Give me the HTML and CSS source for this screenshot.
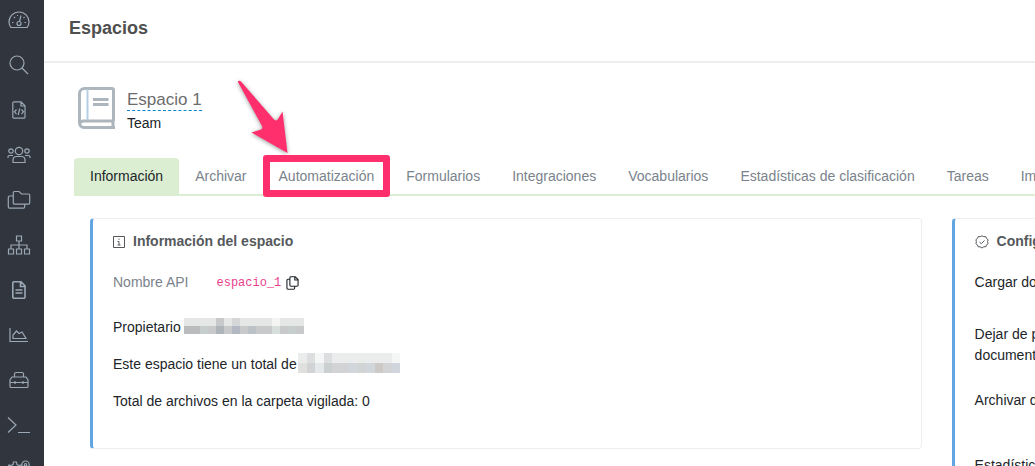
FILE: index.html
```html
<!DOCTYPE html>
<html lang="es">
<head>
  <meta charset="UTF-8" />
  <meta name="viewport" content="width=device-width, initial-scale=1.0" />
  <title>Espacios</title>
  <link rel="stylesheet" href="styles.css">
</head>
<body>

  <nav class="sidebar">
    <a href="#" aria-label="Panel">
      <svg width="22" height="18" viewBox="0 0 22 18"><path d="M3 16.500C1.600 14.900 1 13 1 11a10 10 0 0 1 20 0c0 2-.6 3.900-2 5.500z"/><circle cx="11" cy="12.500" r="2"/><path d="M11.500 10.500l1.500-6M4 11.500h1.500M16.500 11.500H18M6 6l1 1M15.500 7l1-1M9 4.500h1"/></svg>
    </a>
    <a href="#" aria-label="Buscar">
      <svg width="20" height="20" viewBox="0 0 20 20"><circle cx="8" cy="8" r="7"/><path d="M13 13l6 6"/></svg>
    </a>
    <a href="#" aria-label="Código">
      <svg width="14" height="18" viewBox="0 0 14 18"><path d="M2 .8h7l4 4V16a1.200 1.200 0 0 1-1.200 1.200H2A1.200 1.200 0 0 1 .8 16V2A1.200 1.200 0 0 1 2 .8zM9 1v4h4M4.500 8.500l-2 2.300 2 2.300M9.500 8.500l2 2.300-2 2.300M7.800 7.500l-1.600 6.500"/></svg>
    </a>
    <a href="#" aria-label="Usuarios">
      <svg width="24" height="18" viewBox="0 0 24 18"><circle cx="12" cy="5" r="3.700"/><circle cx="4" cy="5" r="2.200"/><circle cx="20" cy="5" r="2.200"/><path d="M6 16.500v-2.500c0-2 1.500-3.500 3.500-3.500h5c2 0 3.500 1.500 3.500 3.500v2.500zM1 12v-1c0-1 .8-1.500 1.500-1.500H6M23 12v-1c0-1-.8-1.500-1.500-1.500H18"/></svg>
    </a>
    <a href="#" aria-label="Carpetas">
      <svg width="24" height="20" viewBox="0 0 24 20"><path d="M7.500 1.500H12l2.500 2.500H21.500a1.200 1.200 0 0 1 1.200 1.200V13a1.200 1.200 0 0 1-1.200 1.200H7.500A1.200 1.200 0 0 1 6.300 13V2.700a1.200 1.200 0 0 1 1.200-1.200zM6 6H2.500A1.200 1.200 0 0 0 1.300 7.200V17a1.200 1.200 0 0 0 1.200 1.200h14A1.200 1.200 0 0 0 17.700 17v-2.500"/></svg>
    </a>
    <a href="#" aria-label="Estructura">
      <svg width="24" height="20" viewBox="0 0 24 20"><path d="M9.500 1h5v5h-5zM1.500 14h5v5h-5zM9.500 14h5v5h-5zM17.500 14h5v5h-5zM12 6v8M4 14v-4h16v4"/></svg>
    </a>
    <a href="#" aria-label="Documentos">
      <svg class="strong" width="14" height="18" viewBox="0 0 14 18"><path d="M2 .8h7l4 4V16a1.200 1.200 0 0 1-1.200 1.200H2A1.200 1.200 0 0 1 .8 16V2A1.200 1.200 0 0 1 2 .8zM8.500 1v4.500H13M3.500 9h7M3.500 12h7"/></svg>
    </a>
    <a href="#" aria-label="Estadísticas">
      <svg width="20" height="16" viewBox="0 0 20 16"><path d="M1 1v13.500h18M4 11.500V8l3.500-4L10 6.500 13 5l4 6.500z"/></svg>
    </a>
    <a href="#" aria-label="Herramientas">
      <svg width="20" height="18" viewBox="0 0 20 18"><path d="M5.500 6V3a1.500 1.500 0 0 1 1.500-1.500h6A1.500 1.500 0 0 1 14.500 3v3M3 6h14l2 3v6.500a1 1 0 0 1-1 1H2a1 1 0 0 1-1-1V9zM1 11.500h18M6 10v3M14 10v3"/></svg>
    </a>
    <a href="#" aria-label="Consola">
      <svg width="24" height="18" viewBox="0 0 24 18"><path d="M1 1.500l8 7.500-8 7.500M11 16.500h12"/></svg>
    </a>
    <a href="#" aria-label="Ajustes">
      <svg width="24" height="20" viewBox="0 0 24 20"><circle cx="8" cy="9" r="2.500"/><path d="M6.500 2h3l.5 2.500 2 1 2-.5 1.500 2.500L14 9v1.500l1.500 1.500-1.500 2.500-2-.5-2 1-.5 2h-3l-.5-2-2-1-2 .5L.5 12 2 10.500V9L.5 7.500 2 5l2 .5 2-1z"/><circle cx="18.500" cy="4.700" r="3.700"/><circle cx="18.500" cy="4.700" r="1.200"/></svg>
    </a>
  </nav>

  <main>
    <header class="topbar">
      <h1>Espacios</h1>
    </header>

    <section class="space">
      <svg class="book" width="38" height="42" viewBox="0 0 38 42"><path d="M35.500 34V3A1.500 1.500 0 0 0 34 1.500H6.500a5 5 0 0 0-5 5v29.500A4.500 4.500 0 0 0 6 40.500H37M36.500 34H6A4.500 4.500 0 0 0 1.500 37M35 34v6.500M15 12.500h15.500M15 17.500h15.500"/><path class="spine" d="M9.500 2v31"/></svg>
      <div>
        <a class="space-name" href="#">Espacio 1</a>
        <div class="space-type">Team</div>
      </div>
    </section>

    <nav class="tabs">
      <a class="tab active" href="#">Información</a>
      <a class="tab" href="#">Archivar</a>
      <a class="tab marked" href="#">Automatización
        <svg class="arrow" width="60" height="84" viewBox="0 0 60 84"><path d="M5.500 7C4 5.500 6 3.500 8 5.500L41 43.500Q43.500 45.500 45 43L49.500 35.500 54.500 77 18.500 56.500 28 53.500Q30 52.500 29 50Z"/></svg>
      </a>
      <a class="tab" href="#">Formularios</a>
      <a class="tab" href="#">Integraciones</a>
      <a class="tab" href="#">Vocabularios</a>
      <a class="tab" href="#">Estadísticas de clasificación</a>
      <a class="tab" href="#">Tareas</a>
      <a class="tab" href="#">Importar</a>
    </nav>

    <div class="cards">
      <section class="card">
        <h2>
          <svg width="12" height="12" viewBox="0 0 12 12"><path d="M.5.500h11v11H.5zM4.500 5.500h1.500V9M4.500 9h3M6 2.500v1.300"/></svg>
          Información del espacio
        </h2>
        <div class="api">
          <span class="label">Nombre API</span>
          <code>espacio_1</code>
          <button class="copy" aria-label="Copiar">
            <svg width="13" height="14" viewBox="0 0 14 15"><path d="M5.200.8h4.800l3 3V10a1 1 0 0 1-1 1H5.200a1 1 0 0 1-1-1V1.800a1 1 0 0 1 1-1zM9.500 1v3.200h3.300M4 3.500H2a1 1 0 0 0-1 1v8.700a1 1 0 0 0 1 1h6.300a1 1 0 0 0 1-1V11.500"/></svg>
          </button>
        </div>
        <p>Propietario
          <svg class="mosaic" width="120" height="16" viewBox="0 0 15 2">
            <path fill="#e5e6e6" d="M0 0h15v1H0z"/><path fill="#c7c9ca" d="M4 0h1v1H4zM0 1h15v1H0z"/><path fill="#d5d6d7" d="M6 0h1v1H6z"/><path fill="#f4f4f3" d="M11 0h1v1h-1z"/>
            <path fill="#b9bbbc" d="M0 1h1v1H0zM1 1h1v1H1z"/><path fill="#c6cdcc" d="M2 1h1v1H2zM13 1h1v1h-1z"/><path fill="#aeb4b8" d="M4 1h1v1H4z"/><path fill="#b3b8c3" d="M6 1h1v1H6z"/><path fill="#bbc1c7" d="M8 1h1v1H8z"/><path fill="#d7dedc" d="M11 1h1v1h-1z"/>
          </svg>
        </p>
        <p class="tight">Este espacio tiene un total de<svg class="mosaic" width="102" height="20" viewBox="0 0 12 2" preserveAspectRatio="none">
            <path fill="#ebecec" d="M0 0h12v1H0z"/><path fill="#dcdee0" d="M1 0h1v1H1zM3 0h1v1H3z"/><path fill="#f5f7f6" d="M2 0h1v1H2zM11 0h1v1h-1z"/>
            <path fill="#d2d3d4" d="M0 1h12v1H0z"/><path fill="#e0e0df" d="M0 1h1v1H0z"/><path fill="#e4e8ea" d="M2 1h1v1H2z"/><path fill="#cacfd0" d="M3 1h1v1H3z"/><path fill="#d1d6dd" d="M6 1h1v1H6zM8 1h1v1H8zM11 1h1v1h-1z"/><path fill="#ccc9c7" d="M9 1h1v1H9z"/>
          </svg>
        </p>
        <p>Total de archivos en la carpeta vigilada: 0</p>
      </section>

      <section class="card settings">
        <h2>
          <svg width="14" height="14" viewBox="0 0 14 14"><path d="M7 .8l1.800.9 2-.1.700 1.800 1.600 1.300-.5 2 .5 2-1.600 1.200-.7 1.900-2-.1L7 13l-1.800-1.200-2 .1-.7-1.900L.9 8.700l.5-2-.5-2 1.600-1.300.7-1.800 2 .1zM4.500 7l1.800 1.700 3.200-3.200"/></svg>
          Configuración
        </h2>
        <div class="setting">Cargar documentos</div>
        <div class="setting">Dejar de procesar<br>documentos</div>
        <div class="setting last">Archivar documentos</div>
        <div class="setting">Estadísticas</div>
      </section>
    </div>
  </main>

</body>
</html>
```
FILE: styles.css
```css
* {
  box-sizing: border-box;
}
body {
  font-family: "Liberation Sans", Arial, sans-serif;
  font-size: 14px;
  line-height: 21px;
  color: #212529;
  background: #fff;
  margin: 0;
  display: flex;
  height: 100vh;
  overflow: hidden;
}
a {
  text-decoration: none;
}
svg {
  fill: none;
  stroke: currentColor;
  flex: none;
}

/* sidebar */
.sidebar {
  flex: 0 0 44px;
  background: #31353d;
  overflow: hidden;
  padding-right: 6px;
}
.sidebar a {
  display: flex;
  align-items: center;
  justify-content: center;
  height: 45px;
  color: #9ba8b5;
  margin-top: -3px;
  margin-bottom: 3px;
}
.sidebar svg {
  stroke-width: 1.2;
}
.sidebar .strong {
  stroke-width: 1.6;
}

/* header */
main {
  flex: 1;
  min-width: 0;
  overflow: hidden;
}
.topbar {
  padding: 18px 25px 22px;
  border-bottom: 2px solid #eee;
}
h1 {
  margin: 0;
  font-size: 18px;
  line-height: 21px;
  color: #4f4f4f;
}
.space {
  display: flex;
  align-items: flex-start;
  gap: 11px;
  padding: 24px 34px 24px;
}
.book {
  stroke: #adb5bd;
  stroke-width: 3;
}
.book .spine {
  stroke: #b4cde2;
  stroke-width: 2;
}
.space-name {
  display: inline-block;
  font-size: 17px;
  line-height: 20px;
  margin-top: 3px;
  color: #6c6c6c;
  border-bottom: 1px dashed #0088cc;
}
.space-type {
  margin-top: 2px;
}

/* tabs */
.tabs {
  display: flex;
  margin-left: 30px;
  border-bottom: 2px solid #dbeed2;
  white-space: nowrap;
}
.tab {
  padding: 8px 16px 7px;
  color: #7a838c;
}
.tab.active {
  background: #dbeed2;
  color: #212529;
  border-radius: 4px 4px 0 0;
}
.marked {
  position: relative;
}
.marked::after {
  content: "";
  box-sizing: border-box;
  position: absolute;
  left: 0;
  right: 0;
  top: -3px;
  height: 42px;
  border: 7px solid #ff2f6d;
  border-radius: 3px;
}
.arrow {
  position: absolute;
  left: -30px;
  bottom: 34px;
  fill: #ff2f6d;
  stroke: none;
  filter: drop-shadow(0 1px 2px rgba(0,0,0,0.4));
}

/* cards */
.cards {
  display: flex;
  gap: 30px;
  align-items: flex-start;
  padding: 22px 0 0 46px;
}
.card {
  flex: 0 0 88%;
  border: 1px solid #eee;
  border-left: 3px solid #62a5e3;
  border-radius: 4px;
  padding: 12px 20px 20px;
}
h2 {
  display: flex;
  align-items: center;
  gap: 8px;
  margin: 0 0 20px;
  font-size: 14px;
  line-height: 21px;
  color: #55595c;
}
.api {
  display: flex;
  align-items: center;
  height: 21px;
  margin-bottom: 24px;
}
.label {
  color: #7a838c;
  margin-right: 28px;
}
code {
  font-family: "Liberation Mono", monospace;
  font-size: 12px;
  color: #e83e8c;
  padding-top: 2px;
}
.copy {
  display: flex;
  margin: 0 0 0 5px;
  padding: 0;
  border: 0;
  background: none;
  color: #212529;
}
.copy svg {
  stroke-width: 1.2;
}
.card p {
  display: flex;
  align-items: center;
  gap: 3px;
  height: 21px;
  margin: 0 0 16px;
}
.card p.tight {
  gap: 1px;
}
.mosaic {
  stroke: none;
  shape-rendering: crispEdges;
  margin-bottom: 4px;
}
.setting {
  margin-bottom: 31px;
}
.setting + .setting {
  margin-bottom: 24px;
}
.setting.last {
  margin-bottom: 44px;
}
```
